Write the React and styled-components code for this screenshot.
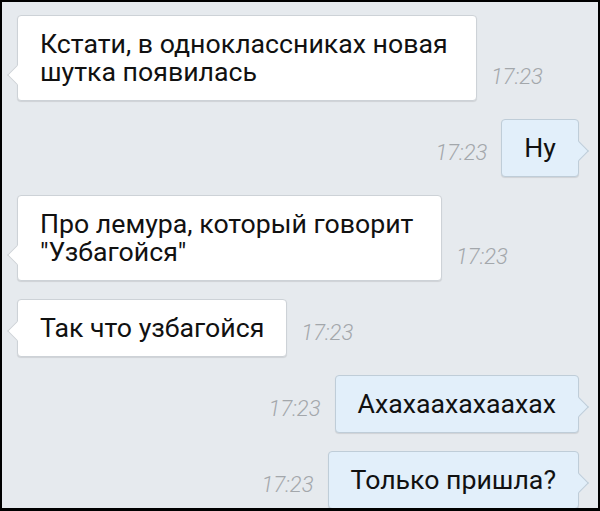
import React from 'react'
import styled, { createGlobalStyle, css } from 'styled-components'

const GlobalStyle = createGlobalStyle`
  html, body {
    margin: 0;
    padding: 0;
    background: #000;
  }
  * {
    box-sizing: border-box;
  }
`

const messages = [
  { id: 1, out: false, text: 'Кстати, в одноклассниках новая шутка появилась', time: '17:23', width: 460 },
  { id: 2, out: true, text: 'Ну', time: '17:23' },
  { id: 3, out: false, text: 'Про лемура, который говорит "Узбагойся"', time: '17:23', width: 425 },
  { id: 4, out: false, text: 'Так что узбагойся', time: '17:23' },
  { id: 5, out: true, text: 'Ахахаахахаахах', time: '17:23' },
  { id: 6, out: true, text: 'Только пришла?', time: '17:23' },
]

const App = () => {
  return (
    <>
      <GlobalStyle />
      <Frame>
        <Chat>
          {messages.map((m) => (
            <Row key={m.id} $out={m.out}>
              <Bubble $out={m.out} style={m.width ? { width: m.width } : undefined}>
                {m.text}
              </Bubble>
              <Time>{m.time}</Time>
            </Row>
          ))}
        </Chat>
      </Frame>
    </>
  )
}

export default App

const Frame = styled.div`
  width: 600px;
  height: 511px;
  padding: 2px 2px 3px 2px;
  background: #000;
`

const Chat = styled.div`
  height: 100%;
  background: #e6eaee;
  display: flex;
  flex-direction: column;
  gap: 18px;
  padding: 13px 19px 0 15px;
  overflow: hidden;
  font-family: Roboto, 'Noto Sans', sans-serif;
`

const Row = styled.div`
  display: flex;
  align-items: flex-end;
  gap: 14px;
  flex-direction: ${(p) => (p.$out ? 'row-reverse' : 'row')};
`

const Bubble = styled.div`
  position: relative;
  flex-shrink: 0;
  padding: 14px 22px 14px;
  font-size: 26.7px;
  line-height: 28px;
  color: #111;
  border-radius: 4px;
  border: 1px solid ${(p) => (p.$out ? '#bfcdd8' : '#cdd2d7')};
  background: ${(p) => (p.$out ? '#e2effa' : '#fff')};
  box-shadow: 0 1px 1px rgba(0, 0, 0, 0.1);

  &::before {
    content: '';
    position: absolute;
    bottom: 18px;
    width: 13px;
    height: 13px;
    background: inherit;
    transform: rotate(45deg);
    ${(p) =>
      p.$out
        ? css`
            right: -8px;
            border-top: 1px solid #bfcdd8;
            border-right: 1px solid #bfcdd8;
          `
        : css`
            left: -8px;
            border-bottom: 1px solid #cdd2d7;
            border-left: 1px solid #cdd2d7;
          `}
  }
`

const Time = styled.div`
  margin-bottom: 13px;
  font-size: 22px;
  line-height: 22px;
  font-style: italic;
  font-weight: 300;
  color: #a3a7ab;
  white-space: nowrap;
`
